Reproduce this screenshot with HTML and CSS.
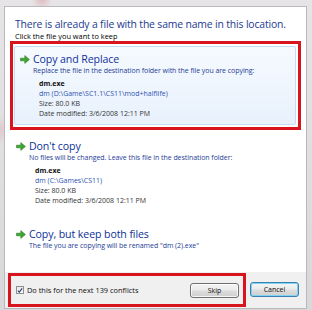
FILE: index.html
```html
<!DOCTYPE html>
<html lang="en">
<head>
  <meta charset="UTF-8" />
  <title>Copy File</title>
  <link rel="stylesheet" href="styles.css">
</head>
<body>
  <div class="dialog">
    <div class="main">
      <div class="title">There is already a file with the same name in this location.</div>
      <div class="hint">Click the file you want to keep</div>

      <div class="mark">
        <div class="option selected">
          <div class="opt-head">
            <svg class="arrow" width="10" height="9" viewBox="0 0 10 9"><path d="M0.5 3.2h4.3V0.6L9.4 4.5 4.8 8.4V5.8H0.5z" fill="#3fa535" stroke="#2a7d22" stroke-width="0.6"/></svg>
            <span>Copy and Replace</span>
          </div>
          <div class="opt-desc">Replace the file in the destination folder with the file you are copying:</div>
          <div class="file">
            <div class="fname">dm.exe</div>
            <div class="fpath">dm (D:\Game\SC1.1\CS11\mod+halflife)</div>
            <div>Size: 80.0 KB</div>
            <div>Date modified: 3/6/2008 12:11 PM</div>
          </div>
        </div>
      </div>

      <div class="option">
        <div class="opt-head">
          <svg class="arrow" width="10" height="9" viewBox="0 0 10 9"><path d="M0.5 3.2h4.3V0.6L9.4 4.5 4.8 8.4V5.8H0.5z" fill="#3fa535" stroke="#2a7d22" stroke-width="0.6"/></svg>
          <span>Don't copy</span>
        </div>
        <div class="opt-desc">No files will be changed. Leave this file in the destination folder:</div>
        <div class="file">
          <div class="fname">dm.exe</div>
          <div class="fpath">dm (C:\Games\CS11)</div>
          <div>Size: 80.0 KB</div>
          <div>Date modified: 3/6/2008 12:11 PM</div>
        </div>
      </div>

      <div class="option last">
        <div class="opt-head">
          <svg class="arrow" width="10" height="9" viewBox="0 0 10 9"><path d="M0.5 3.2h4.3V0.6L9.4 4.5 4.8 8.4V5.8H0.5z" fill="#3fa535" stroke="#2a7d22" stroke-width="0.6"/></svg>
          <span>Copy, but keep both files</span>
        </div>
        <div class="opt-desc">The file you are copying will be renamed "dm (2).exe"</div>
      </div>
    </div>

    <div class="footer">
      <div class="mark footer-mark">
        <span class="check">
          <svg width="7" height="7" viewBox="0 0 7 7"><path d="M1 3.6l1.7 1.8L6 1" fill="none" stroke="#2b3a6b" stroke-width="1.2"/></svg>
        </span>
        <span class="check-label">Do this for the next 139 conflicts</span>
        <button class="btn">Skip</button>
      </div>
      <button class="btn default">Cancel</button>
    </div>
  </div>
</body>
</html>
```

FILE: styles.css
```css
* {
  box-sizing: border-box;
}
body {
  margin: 0;
  width: 312px;
  height: 310px;
  overflow: hidden;
  background:
    radial-gradient(circle at 42px 0, rgba(214, 150, 160, 0.5), transparent 10px),
    radial-gradient(circle at 0 130px, rgba(220, 170, 175, 0.4), transparent 14px),
    linear-gradient(to bottom, #e6e4e6, #d8d8da);
  font-family: 'Open Sans', 'Noto Sans', sans-serif;
  padding: 6px 0 0 4px;
}
.dialog {
  width: 303px;
  height: 303px;
  background: #fff;
  border: 1px solid #b9b9b9;
  display: flex;
  flex-direction: column;
}
.main {
  flex: 1;
  padding: 10px 5px 0 5px;
}
.title {
  font-size: 10.4px;
  line-height: 14px;
  color: #1c3a8f;
  letter-spacing: -0.15px;
  padding-left: 5px;
}
.hint {
  font-size: 7.4px;
  line-height: 10px;
  color: #000;
  padding-left: 5px;
}
.mark {
  border: 3px solid #d8151f;
  padding: 2px 2px 2px 1px;
}
.option {
  padding: 6px 4px 5px 5px;
  border: 1px solid transparent;
  border-radius: 2px;
}
.option.selected {
  border-color: #c5dcf7;
  background: linear-gradient(to bottom, #f6faff, #e8f1fc);
}
.mark + .option {
  margin-top: 3px;
}
.option.last {
  margin-top: 9px;
}
.opt-head {
  display: flex;
  align-items: center;
  gap: 3px;
  font-size: 10.6px;
  line-height: 13px;
  color: #0e3196;
  letter-spacing: -0.1px;
}
.arrow {
  flex: none;
}
.opt-desc {
  font-size: 7px;
  line-height: 10px;
  color: #1d3d96;
  padding-left: 13px;
  letter-spacing: -0.05px;
}
.file {
  padding: 3px 0 0 19px;
  font-size: 7px;
  line-height: 10px;
  color: #333;
}
.fname {
  font-weight: bold;
  color: #111;
}
.fpath {
  color: #2e52b0;
}
.footer {
  height: 36px;
  background: #f0f0f0;
  display: flex;
  align-items: flex-start;
  padding: 1px 0 0 3px;
}
.footer-mark {
  width: 238px;
  height: 34px;
  display: flex;
  align-items: center;
  padding: 0 4px 0 5px;
}
.check {
  width: 8px;
  height: 8px;
  border: 1px solid #8e8f8f;
  background: linear-gradient(to bottom, #e6e6e6, #fafafa);
  display: flex;
  align-items: center;
  justify-content: center;
  margin-right: 3px;
}
.check svg {
  display: block;
}
.check-label {
  font-size: 7.4px;
  color: #111;
  flex: 1;
}
.btn {
  font-family: 'Open Sans', 'Noto Sans', sans-serif;
  font-size: 7px;
  color: #111;
  width: 49px;
  height: 15px;
  padding: 0;
  border: 1px solid #707070;
  border-radius: 3px;
  background: linear-gradient(to bottom, #f4f4f4 0%, #ebebeb 48%, #dddddd 52%, #cfcfcf 100%);
  box-shadow: inset 0 0 0 1px rgba(255, 255, 255, 0.8);
}
.default {
  margin-top: 9px;
  margin-left: 4px;
  border-color: #3c7fb1;
  box-shadow: inset 0 0 0 1px #7fd4f4;
}
```
